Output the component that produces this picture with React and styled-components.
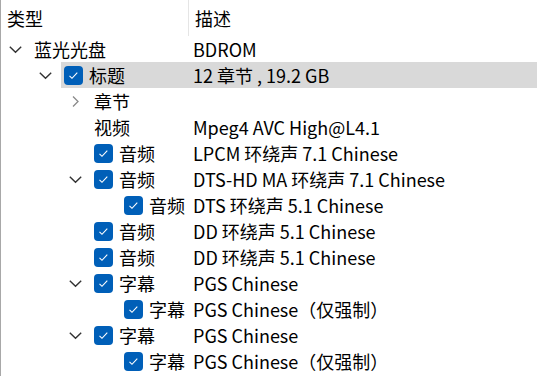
import React from 'react';
import styled, { createGlobalStyle } from 'styled-components';

const GlobalStyle = createGlobalStyle`
    html, body {
        margin: 0;
        padding: 0;
        background: #fff;
    }
    body {
        font-family: "Noto Sans CJK SC", "Noto Sans", sans-serif;
        font-size: 18px;
        color: #000;
    }
`;

const rows = [
    { level: 0, expand: 'down', name: '蓝光光盘', desc: 'BDROM' },
    { level: 1, expand: 'down', check: true, name: '标题', desc: '12 章节 , 19.2 GB', selected: true },
    { level: 2, expand: 'right', name: '章节', desc: '' },
    { level: 2, name: '视频', desc: 'Mpeg4 AVC High@L4.1' },
    { level: 2, check: true, name: '音频', desc: 'LPCM 环绕声 7.1 Chinese' },
    { level: 2, expand: 'down', check: true, name: '音频', desc: 'DTS-HD MA 环绕声 7.1 Chinese' },
    { level: 3, check: true, name: '音频', desc: 'DTS 环绕声 5.1 Chinese' },
    { level: 2, check: true, name: '音频', desc: 'DD 环绕声 5.1 Chinese' },
    { level: 2, check: true, name: '音频', desc: 'DD 环绕声 5.1 Chinese' },
    { level: 2, expand: 'down', check: true, name: '字幕', desc: 'PGS Chinese' },
    { level: 3, check: true, name: '字幕', desc: 'PGS Chinese（仅强制）' },
    { level: 2, expand: 'down', check: true, name: '字幕', desc: 'PGS Chinese' },
    { level: 3, check: true, name: '字幕', desc: 'PGS Chinese（仅强制）' },
];

function Chevron({ dir }) {
    if (dir === 'right') {
        return (
            <svg width="13" height="13" viewBox="0 0 13 13">
                <path d="M4 1.5 L9 6.5 L4 11.5" fill="none" stroke="#8a8a8a" strokeWidth="1.3" />
            </svg>
        );
    }
    return (
        <svg width="13" height="13" viewBox="0 0 13 13">
            <path d="M0.8 3.8 L6.5 9.3 L12.2 3.8" fill="none" stroke="#333" strokeWidth="1.4" />
        </svg>
    );
}

function CheckBox() {
    return (
        <Check>
            <svg width="19" height="19" viewBox="0 0 19 19">
                <path d="M5.5 9.8 L8 12.3 L13.3 6.6" fill="none" stroke="#fff" strokeWidth="1.1" />
            </svg>
        </Check>
    );
}

function App() {
    return (
        <>
            <GlobalStyle />
            <Tree>
                <Header>
                    <HeadCell>类型</HeadCell>
                    <HeadCell last>描述</HeadCell>
                </Header>
                {rows.map((r, i) => (
                    <Row key={i} level={r.level}>
                        <Expander>{r.expand && <Chevron dir={r.expand} />}</Expander>
                        <Body selected={r.selected}>
                            <Name level={r.level}>
                                {r.check && <CheckBox />}
                                <Label>{r.name}</Label>
                            </Name>
                            <Desc>{r.desc}</Desc>
                        </Body>
                    </Row>
                ))}
            </Tree>
        </>
    );
}

const Tree = styled.div`
    width: 536px;
    height: 376px;
    border-left: 1px solid #a8a8a8;
    overflow: hidden;
`;

const Header = styled.div`
    display: flex;
    height: 36px;
`;

const HeadCell = styled.div`
    display: flex;
    align-items: center;
    padding-left: ${({ last }) => (last ? '6px' : '6px')};
    width: ${({ last }) => (last ? 'auto' : '181px')};
    flex: ${({ last }) => (last ? '1' : 'none')};
    border-right: ${({ last }) => (last ? 'none' : '1px solid #e5e5e5')};
    padding-bottom: 1px;
`;

const Row = styled.div`
    display: flex;
    align-items: stretch;
    height: 26px;
    padding-left: ${({ level }) => 8 + level * 30}px;
`;

const Expander = styled.div`
    width: 25px;
    flex: none;
    display: flex;
    align-items: center;
    svg {
        display: block;
    }
`;

const Body = styled.div`
    flex: 1;
    display: flex;
    align-items: center;
    margin-left: -3px;
    padding-left: 3px;
    background: ${({ selected }) => (selected ? '#d9d9d9' : 'transparent')};
`;

const Name = styled.div`
    width: ${({ level }) => 159 - level * 30}px;
    flex: none;
    display: flex;
    align-items: center;
    overflow: hidden;
    white-space: nowrap;
`;

const Check = styled.div`
    width: 19px;
    height: 19px;
    flex: none;
    margin-right: 6px;
    border-radius: 4px;
    background: #005fb8;
    svg {
        display: block;
    }
`;

const Label = styled.span`
    line-height: 26px;
`;

const Desc = styled.div`
    white-space: nowrap;
    line-height: 26px;
`;

export default App;
